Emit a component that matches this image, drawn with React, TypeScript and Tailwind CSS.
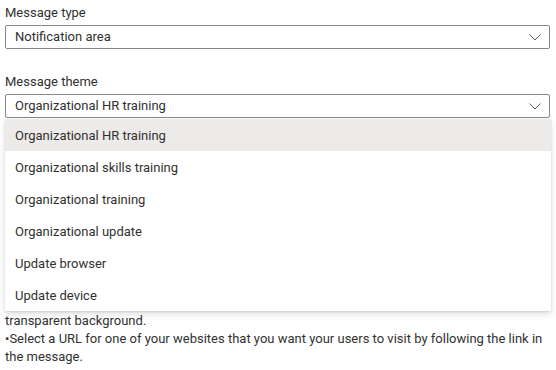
import React from "react";

const options = [
  "Organizational HR training",
  "Organizational skills training",
  "Organizational training",
  "Organizational update",
  "Update browser",
  "Update device",
];

function Chevron() {
  return (
    <svg width="12" height="7" viewBox="0 0 12 7" className="shrink-0">
      <polyline points="0.5,0.5 6,6 11.5,0.5" fill="none" stroke="#605e5c" strokeWidth="1" />
    </svg>
  );
}

function Select({ value }: { value: string }) {
  return (
    <div className="flex h-[24px] items-center justify-between rounded-[2px] border border-[#8a8886] bg-white pl-[9px] pr-[8px]">
      <span className="leading-5">{value}</span>
      <Chevron />
    </div>
  );
}

export default function App() {
  return (
    <div
      className="relative h-[370px] w-[556px] overflow-hidden bg-white pl-[5px] pr-[6px] text-[13px] text-[#323130]"
      style={{ fontFamily: 'Roboto, "Liberation Sans", sans-serif' }}
    >
      <label className="block pt-[3px] pb-[2px] leading-5">Message type</label>
      <Select value="Notification area" />

      <label className="mt-[20px] block pt-[3px] pb-[2px] leading-5">Message theme</label>
      <div className="relative">
        <Select value="Organizational HR training" />
        <ul className="absolute top-[25px] left-0 right-[-1px] z-10 bg-white shadow-[0_3.2px_7.2px_rgba(0,0,0,0.13),0_0.6px_1.8px_rgba(0,0,0,0.11)]">
          {options.map((o, i) => (
            <li
              key={o}
              className={`flex h-[32px] items-center pt-[1px] pl-[10px] ${i === 0 ? "bg-[#edebe9]" : ""}`}
            >
              {o}
            </li>
          ))}
        </ul>
      </div>

      <div className="pt-[194px] leading-[18px]">
        <p>transparent background.</p>
        <p>
          •Select a URL for one of your websites that you want your users to visit by following the link in
          the message.
        </p>
      </div>
    </div>
  );
}
